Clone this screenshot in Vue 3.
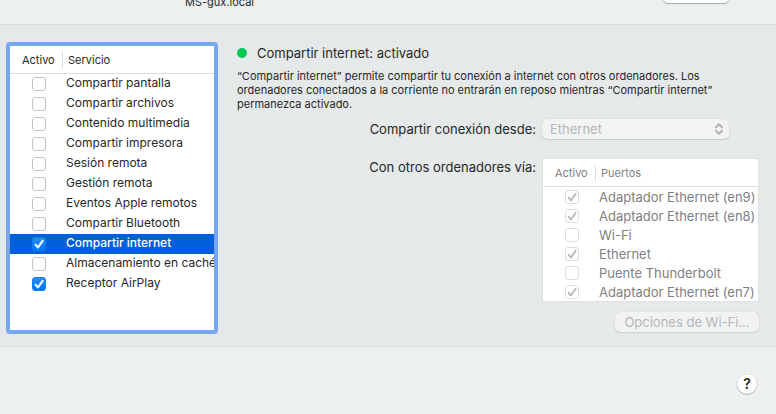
<template>
  <div class="window">
    <header class="top-bar">
      <span class="host-name">MS-gux.local</span>
      <button type="button" class="edit-button" aria-label="Editar"></button>
    </header>

    <main class="content">
      <!-- services list -->
      <section class="services">
        <table class="list">
          <thead>
            <tr>
              <th class="col-active"><span>Activo</span></th>
              <th class="col-name">Servicio</th>
            </tr>
          </thead>
          <tbody>
            <tr
              v-for="(service, i) in services"
              :key="service.name"
              :class="{ selected: selected === i }"
              @click="selected = i"
            >
              <td class="col-active">
                <span class="check">
                  <input :id="'service-' + i" v-model="service.active" type="checkbox" />
                  <svg v-if="service.active" width="14" height="14" viewBox="0 0 14 14">
                    <path d="M3.6 7.7 L6 10.5 L10.6 3.9" />
                  </svg>
                </span>
              </td>
              <td class="col-name"><label :for="'service-' + i">{{ service.name }}</label></td>
            </tr>
          </tbody>
        </table>
      </section>

      <!-- selected service details -->
      <section class="details">
        <h1 class="status"><i class="dot"></i>Compartir internet: activado</h1>
        <p class="description">
          “Compartir internet” permite compartir tu conexión a internet con otros ordenadores. Los
          ordenadores conectados a la corriente no entrarán en reposo mientras “Compartir internet”
          permanezca activado.
        </p>

        <div class="form">
          <label class="form-label" for="source">Compartir conexión desde:</label>
          <div class="select">
            <select id="source" disabled>
              <option>Ethernet</option>
            </select>
            <svg width="8" height="12" viewBox="0 0 8 12">
              <path d="M1 4.2 L4 1.2 L7 4.2 M1 7.8 L4 10.8 L7 7.8" />
            </svg>
          </div>

          <span id="ports-label" class="form-label">Con otros ordenadores vía:</span>
          <div class="ports">
            <table class="list" aria-labelledby="ports-label">
              <thead>
                <tr>
                  <th class="col-active"><span>Activo</span></th>
                  <th class="col-name">Puertos</th>
                </tr>
              </thead>
              <tbody>
                <tr v-for="(port, i) in ports" :key="port.name">
                  <td class="col-active">
                    <span class="check">
                      <input :id="'port-' + i" v-model="port.active" type="checkbox" disabled />
                      <svg v-if="port.active" width="14" height="14" viewBox="0 0 14 14">
                        <path d="M3.6 7.7 L6 10.5 L10.6 3.9" />
                      </svg>
                    </span>
                  </td>
                  <td class="col-name"><label :for="'port-' + i">{{ port.name }}</label></td>
                </tr>
              </tbody>
            </table>
          </div>
        </div>

        <button type="button" class="wifi-button" disabled>Opciones de Wi-Fi...</button>
      </section>
    </main>

    <footer class="bottom-bar">
      <button type="button" class="help-button" aria-label="Ayuda">?</button>
    </footer>
  </div>
</template>

<script setup>
import { ref } from 'vue'

const selected = ref(8)

const services = ref([
  { name: 'Compartir pantalla', active: false },
  { name: 'Compartir archivos', active: false },
  { name: 'Contenido multimedia', active: false },
  { name: 'Compartir impresora', active: false },
  { name: 'Sesión remota', active: false },
  { name: 'Gestión remota', active: false },
  { name: 'Eventos Apple remotos', active: false },
  { name: 'Compartir Bluetooth', active: false },
  { name: 'Compartir internet', active: true },
  { name: 'Almacenamiento en caché', active: false },
  { name: 'Receptor AirPlay', active: true }
])

const ports = ref([
  { name: 'Adaptador Ethernet (en9)', active: true },
  { name: 'Adaptador Ethernet (en8)', active: true },
  { name: 'Wi-Fi', active: false },
  { name: 'Ethernet', active: true },
  { name: 'Puente Thunderbolt', active: false },
  { name: 'Adaptador Ethernet (en7)', active: true }
])
</script>

<style>
body {
  margin: 0;
  background: #ecf0f1;
}
</style>

<style scoped>
.window {
  display: flex;
  flex-direction: column;
  min-height: 100vh;
  font-family: Inter, "Liberation Sans", sans-serif;
  font-size: 13px;
  color: #262727;
}

button,
select {
  font: inherit;
  box-sizing: border-box;
}

/* top bar */
.top-bar {
  display: flex;
  align-items: flex-end;
  justify-content: space-between;
  box-sizing: border-box;
  height: 25px;
  padding: 0 47px 13px 185px;
  overflow: hidden;
  border-bottom: 1px solid #d8dcdd;
}

.host-name {
  font-size: 11px;
  line-height: 18px;
}

.edit-button {
  width: 66px;
  height: 20px;
  margin-bottom: 8px;
  border: 0;
  border-radius: 5px;
  background: #fff;
  box-shadow: 0 1px 1px rgba(0, 0, 0, 0.3);
}

.content {
  display: flex;
  align-items: stretch;
  gap: 19px;
  padding: 17px 17px 12px 6px;
  background: #e5e9ea;
  border-bottom: 1px solid #d8dcdd;
}

/* services list */
.services {
  flex: none;
  box-sizing: border-box;
  width: 212px;
  overflow: hidden;
  border: 4px solid #77a6ec;
  border-radius: 4px;
  background: #fff;
}

.list {
  width: 100%;
  table-layout: fixed;
  border-collapse: separate;
  border-spacing: 0;
}

.list th {
  height: 27px;
  padding: 0;
  border-bottom: 1px solid #dedede;
  font-size: 11px;
  font-weight: 400;
  line-height: 16px;
  text-align: left;
}

.list th.col-active {
  width: 53px;
}

.list th.col-active span {
  display: block;
  padding-left: 12px;
  border-right: 1px solid #dcdcdc;
}

.list th.col-name {
  padding-left: 5px;
}

.list td {
  height: 20px;
  padding: 0;
  font-size: 12px;
  line-height: 18px;
  white-space: nowrap;
}

.list td.col-active {
  padding-left: 22px;
}

.list td.col-name {
  padding-left: 3px;
}

.services td.col-name {
  padding-bottom: 2px;
  height: 18px;
}

.list label {
  display: block;
}

.selected {
  background: #0060dc;
  color: #fff;
}

.selected label {
  font-weight: 500;
}

/* checkboxes */
.check {
  display: grid;
  width: 14px;
  height: 14px;
}

.check input,
.check svg {
  grid-area: 1 / 1;
}

.check input {
  appearance: none;
  box-sizing: border-box;
  width: 14px;
  height: 14px;
  margin: 0;
  border: 1px solid #c4c4c4;
  border-radius: 3px;
  background: #fff;
}

.check input:checked {
  border-color: #0f7cf5;
  background: linear-gradient(#2790fb, #0075fb);
}

.check input:disabled {
  border-color: #dedede;
  background: #fff;
}

.check svg {
  pointer-events: none;
  fill: none;
  stroke: #fff;
  stroke-width: 2;
  stroke-linecap: round;
  stroke-linejoin: round;
}

/* details */
.details {
  display: flex;
  flex: 1;
  flex-direction: column;
  min-width: 0;
}

.status {
  display: flex;
  align-items: center;
  gap: 10px;
  margin: 2px 0 7px;
  font-size: 13px;
  font-weight: 400;
  line-height: 18px;
}

.dot {
  width: 10px;
  height: 10px;
  border-radius: 50%;
  background: #00c853;
}

.description {
  margin: 0;
  font-size: 11px;
  line-height: 14px;
}

.form {
  display: grid;
  grid-template-columns: 1fr 217px;
  column-gap: 6px;
  row-gap: 18px;
  margin-top: 8px;
}

.form-label {
  line-height: 20px;
  text-align: right;
}

.select {
  display: grid;
  align-items: center;
  width: 187px;
}

.select select,
.select svg {
  grid-area: 1 / 1;
}

.select select {
  appearance: none;
  width: 100%;
  height: 20px;
  padding: 0 24px 0 8px;
  border: 0;
  border-radius: 5px;
  background: #f2f4f4;
  box-shadow: 0 0 1px rgba(0, 0, 0, 0.2), 0 1px 1px rgba(0, 0, 0, 0.12);
  color: #b4b6b6;
  opacity: 1;
}

.select svg {
  justify-self: end;
  margin-right: 6px;
  pointer-events: none;
  fill: none;
  stroke: #b0b2b2;
  stroke-width: 2;
  stroke-linecap: round;
  stroke-linejoin: round;
}

.ports {
  box-sizing: border-box;
  width: 217px;
  margin-top: 1px;
  overflow: hidden;
  border: 1px solid #dfe2e3;
  background: #fff;
  color: #7f7f7f;
}

.ports td {
  height: 19px;
  font-size: 13px;
}

.ports .check svg {
  stroke: #bdbdbd;
}

.wifi-button {
  align-self: flex-end;
  width: 144px;
  height: 20px;
  margin: 10px 0 2px;
  padding: 0;
  border: 0;
  border-radius: 5px;
  background: #f1f3f3;
  box-shadow: 0 0 1px rgba(0, 0, 0, 0.25), 0 1px 1px rgba(0, 0, 0, 0.08);
  color: #b4b6b6;
  line-height: 20px;
}

/* bottom bar */
.bottom-bar {
  display: flex;
  flex: 1;
  align-items: flex-start;
  justify-content: flex-end;
  padding: 27px 19px 12px;
}

.help-button {
  width: 20px;
  height: 20px;
  padding: 0;
  border: 0;
  border-radius: 50%;
  background: #fff;
  box-shadow: 0 0 1px rgba(0, 0, 0, 0.3), 0 1px 1px rgba(0, 0, 0, 0.2);
  color: #262727;
  font-size: 14px;
  font-weight: 600;
  line-height: 20px;
}
</style>
